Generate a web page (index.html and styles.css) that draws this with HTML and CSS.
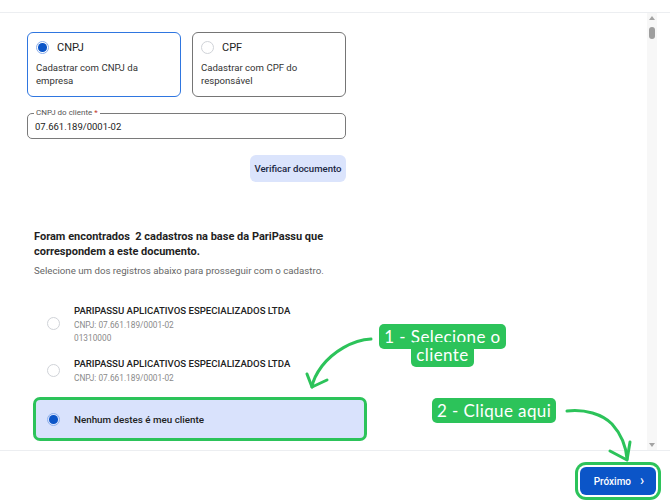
FILE: index.html
```html
<!DOCTYPE html>
<html lang="pt-BR">
<head>
<meta charset="utf-8">
<title>Cadastro de cliente</title>
<link rel="stylesheet" href="styles.css">
</head>
<body>
<div class="page">
  <div class="topbar"></div>
  <div class="main">
    <div class="content">
      <div class="choice-row">
        <div class="choice selected">
          <div class="choice-head"><span class="radio on"></span><span class="choice-title">CNPJ</span></div>
          <div class="choice-desc">Cadastrar com CNPJ da<br>empresa</div>
        </div>
        <div class="choice">
          <div class="choice-head"><span class="radio"></span><span class="choice-title">CPF</span></div>
          <div class="choice-desc">Cadastrar com CPF do<br>responsável</div>
        </div>
      </div>

      <div class="field">
        <span class="field-label">CNPJ do cliente <span class="req">*</span></span>
        <span class="field-value">07.661.189/0001-02</span>
      </div>

      <div class="actions">
        <button class="btn-verify">Verificar documento</button>
      </div>

      <div class="results">
        <h2 class="results-title">Foram encontrados&nbsp; 2 cadastros na base da PariPassu que<br>correspondem a este documento.</h2>
        <p class="results-sub">Selecione um dos registros abaixo para prosseguir com o cadastro.</p>
      </div>

      <div class="list">
        <div class="item">
          <span class="radio"></span>
          <div class="item-text">
            <div class="item-title">PARIPASSU APLICATIVOS ESPECIALIZADOS LTDA</div>
            <div class="item-meta">CNPJ: 07.661.189/0001-02</div>
            <div class="item-meta">01310000</div>
          </div>
        </div>
        <div class="item">
          <span class="radio"></span>
          <div class="item-text">
            <div class="item-title">PARIPASSU APLICATIVOS ESPECIALIZADOS LTDA</div>
            <div class="item-meta">CNPJ: 07.661.189/0001-02</div>
          </div>
        </div>
        <div class="item item-selected">
          <span class="radio on"></span>
          <div class="item-text">
            <div class="item-none">Nenhum destes é meu cliente</div>
          </div>
        </div>
      </div>
    </div>
    <div class="scrollbar">
      <span class="sb-up"></span>
      <span class="sb-thumb"></span>
      <span class="sb-fill"></span>
      <span class="sb-down"></span>
    </div>
  </div>
  <div class="footer">
    <button class="btn-next">Próximo <span class="chev">›</span></button>
  </div>

  <svg class="arrows" width="670" height="504" viewBox="0 0 670 504">
    <g fill="none" stroke="#2cc35a" stroke-width="3" stroke-linecap="round" stroke-linejoin="round">
      <path d="M371 339 C 352 340 333 352 322 366 C 316 374 313 380 312 387"/>
      <path d="M307 374 L 312 387 L 327 380"/>
      <path d="M567 411 C 585 409 602 414 612 424 C 621 434 626 446 627 459"/>
      <path d="M610 451 L 627 460 L 630 442"/>
    </g>
  </svg>

  <div class="note note-1"><span>1 - Selecione o cliente</span></div>
  <div class="note note-2"><span>2 - Clique aqui</span></div>
</div>
</body>
</html>
```

FILE: styles.css
```css
* { box-sizing: border-box; }

html, body {
  margin: 0;
  padding: 0;
  background: #ffffff;
}

body {
  width: 670px;
  height: 504px;
  overflow: hidden;
  font-family: Roboto, "Noto Sans", "Liberation Sans", sans-serif;
  color: #202124;
}

.page {
  position: relative;
  width: 670px;
  height: 504px;
}

.topbar {
  height: 13px;
  border-bottom: 1px solid #eceef1;
}

.main {
  display: flex;
  height: 437px;
}

.content {
  flex: 1;
  padding: 19px 0 0 27px;
}

/* choice cards */
.choice-row {
  display: flex;
  gap: 11px;
}

.choice {
  width: 154px;
  height: 65px;
  border: 1.5px solid #757575;
  border-radius: 6px;
  padding: 6px 8px;
}

.choice.selected {
  border-color: #2f76e0;
}

.choice-head {
  display: flex;
  align-items: center;
  gap: 8px;
  height: 16px;
}

.choice-title {
  font-size: 11px;
  color: #222;
}

.choice-desc {
  margin-top: 6px;
  font-size: 9.6px;
  line-height: 13px;
  color: #333;
}

/* radios */
.radio {
  flex: none;
  width: 13px;
  height: 13px;
  border-radius: 50%;
  border: 1px solid #d0d3d8;
  background: #fff;
}

.radio.on {
  border: 1px solid #8db0ec;
  padding: 1.2px;
  background: #0b55c8;
  background-clip: content-box;
}

/* input */
.field {
  position: relative;
  margin-top: 16px;
  width: 319px;
  height: 26px;
  border: 1px solid #7a7a7a;
  border-radius: 5px;
  display: flex;
  align-items: center;
  padding: 0 8px 0 7px;
}

.field-label {
  position: absolute;
  top: -6px;
  left: 6px;
  padding: 0 2px;
  background: #fff;
  font-size: 8px;
  line-height: 10px;
  color: #555;
}

.req { color: #c0392b; }

.field-value {
  font-size: 9.5px;
  color: #222;
  padding-top: 1px;
}

/* verify */
.actions {
  width: 319px;
  margin-top: 16px;
  display: flex;
  justify-content: flex-end;
}

.btn-verify {
  height: 27px;
  width: 96px;
  border: 0;
  border-radius: 6px;
  background: #dbe4fc;
  color: #1a2742;
  font-family: inherit;
  font-size: 9.6px;
  font-weight: 500;
  padding: 0;
}

/* results */
.results {
  margin: 47px 0 0 7px;
}

.results-title {
  margin: 0;
  font-size: 11px;
  line-height: 15px;
  font-weight: 700;
  color: #1f1f1f;
}

.results-sub {
  margin: 5px 0 0;
  font-size: 9.7px;
  line-height: 14px;
  color: #666;
}

/* list */
.list {
  margin: 24px 0 0 6px;
  width: 334px;
  display: flex;
  flex-direction: column;
  gap: 10px;
}

.item {
  display: flex;
  align-items: center;
  gap: 14px;
  padding: 0 14px;
}

.item-title {
  font-size: 9.6px;
  font-weight: 500;
  line-height: 17px;
  color: #222;
}

.item-meta {
  font-size: 8.3px;
  line-height: 13px;
  color: #8a8a8a;
}

.item-selected {
  height: 44px;
  margin-top: 2px;
  padding-left: 11px;
  border: 3px solid #2cc35a;
  border-radius: 7px;
  background: #d9e2fc;
}

.item-none {
  font-size: 9.8px;
  font-weight: 500;
  color: #222;
}

/* fake scrollbar */
.scrollbar {
  width: 10px;
  margin-right: 13px;
  background: #f7f7f7;
  display: flex;
  flex-direction: column;
  align-items: center;
  padding: 3px 0 3px;
}

.sb-up, .sb-down {
  width: 0;
  height: 0;
  border-left: 3.5px solid transparent;
  border-right: 3.5px solid transparent;
}

.sb-up { border-bottom: 4px solid #a3a3a3; }
.sb-down { border-top: 4px solid #a3a3a3; }

.sb-thumb {
  margin-top: 7px;
  width: 6px;
  height: 12px;
  border-radius: 3px;
  background: #9e9e9e;
}

.sb-fill { flex: 1; }

/* footer */
.footer {
  height: 54px;
  border-top: 1px solid #eceef1;
  display: flex;
  justify-content: flex-end;
  padding: 16px 14px 0 0;
}

.btn-next {
  width: 76px;
  height: 28px;
  border: 0;
  border-radius: 6px;
  background: #0b55c8;
  color: #fff;
  font-family: inherit;
  font-size: 10px;
  font-weight: 500;
  box-shadow: 0 0 0 2px #ffffff, 0 0 0 5px #2cc35a;
  display: flex;
  align-items: center;
  justify-content: center;
  gap: 9px;
  padding: 0 0 0 2px;
}

.chev {
  font-size: 14px;
  line-height: 1;
  margin-top: -2px;
}

/* annotations overlay */
.arrows {
  position: absolute;
  left: 0;
  top: 0;
  pointer-events: none;
}

.note {
  position: absolute;
  text-align: center;
  font-family: Lato, "Open Sans", sans-serif;
  font-size: 17px;
  line-height: 18px;
  letter-spacing: 0.4px;
  color: #fff;
}

.note span {
  background: #2cc35a;
  border-radius: 5px;
  padding: 2px 5px;
  -webkit-box-decoration-break: clone;
  box-decoration-break: clone;
}

.note-1 {
  left: 379px;
  top: 328px;
  width: 127px;
}

.note-2 {
  left: 432px;
  top: 402px;
  white-space: nowrap;
}
```
